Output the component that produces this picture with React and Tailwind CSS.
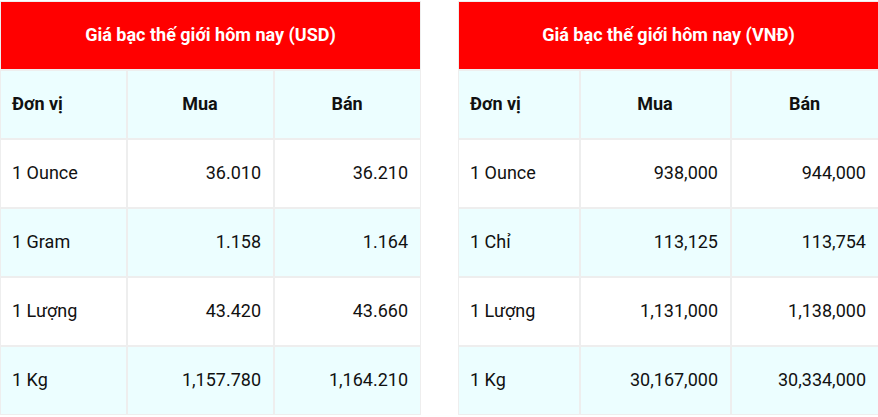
import React from "react";

const usdRows = [
  ["1 Ounce", "36.010", "36.210"],
  ["1 Gram", "1.158", "1.164"],
  ["1 Lượng", "43.420", "43.660"],
  ["1 Kg", "1,157.780", "1,164.210"],
];

const vndRows = [
  ["1 Ounce", "938,000", "944,000"],
  ["1 Chỉ", "113,125", "113,754"],
  ["1 Lượng", "1,131,000", "1,138,000"],
  ["1 Kg", "30,167,000", "30,334,000"],
];

function PriceTable({ title, rows, widths }) {
  const cell = "h-[69px] border border-[#eeeeee] pl-[11px] pr-3 pb-[3px] align-middle";
  return (
    <table className="w-[421px] shrink-0 table-fixed border-separate border-spacing-0 text-[18px] text-[#111]">
      <colgroup>
        <col className={widths[0]} />
        <col className={widths[1]} />
        <col />
      </colgroup>
      <thead>
        <tr>
          <th
            colSpan={3}
            className="h-[69px] border border-[#eeeeee] bg-[#ff0000] pb-[2px] text-center font-bold text-white"
          >
            {title}
          </th>
        </tr>
        <tr className="bg-cyan-50">
          <th className={`${cell} text-left font-bold`}>Đơn vị</th>
          <th className={`${cell} text-center font-bold`}>Mua</th>
          <th className={`${cell} text-center font-bold`}>Bán</th>
        </tr>
      </thead>
      <tbody>
        {rows.map((r, i) => (
          <tr key={r[0]} className={i % 2 ? "bg-cyan-50" : "bg-white"}>
            <td className={`${cell} text-left`}>{r[0]}</td>
            <td className={`${cell} text-right`}>{r[1]}</td>
            <td className={`${cell} text-right`}>{r[2]}</td>
          </tr>
        ))}
      </tbody>
    </table>
  );
}

export default function App() {
  return (
    <div className="flex w-[878px] gap-[37px] overflow-hidden bg-white pt-px font-['Roboto',sans-serif]">
      <PriceTable
        title="Giá bạc thế giới hôm nay (USD)"
        rows={usdRows}
        widths={["w-[127px]", "w-[147px]"]}
      />
      <PriceTable
        title="Giá bạc thế giới hôm nay (VNĐ)"
        rows={vndRows}
        widths={["w-[122px]", "w-[151px]"]}
      />
    </div>
  );
}
